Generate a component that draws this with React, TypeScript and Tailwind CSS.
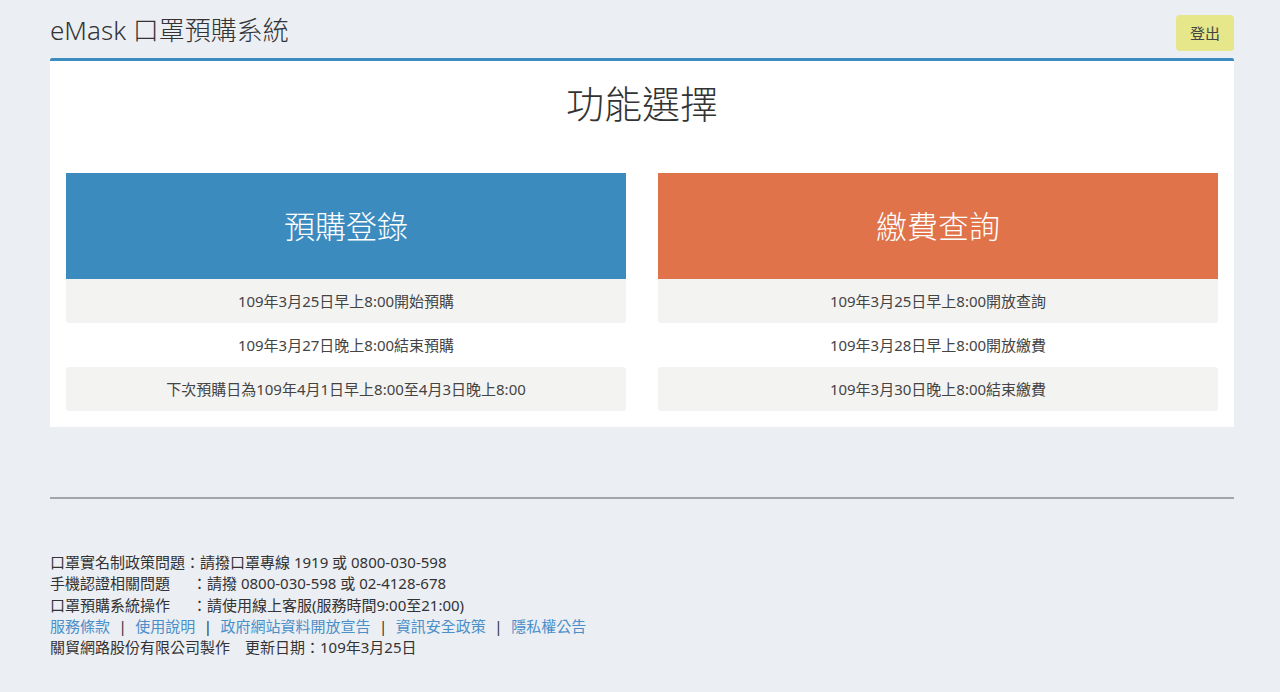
export default function App() {
  const font = {
    fontFamily: '"Noto Sans", "Noto Sans CJK TC", sans-serif',
  };

  const left = [
    "109年3月25日早上8:00開始預購",
    "109年3月27日晚上8:00結束預購",
    "下次預購日為109年4月1日早上8:00至4月3日晚上8:00",
  ];
  const right = [
    "109年3月25日早上8:00開放查詢",
    "109年3月28日早上8:00開放繳費",
    "109年3月30日晚上8:00結束繳費",
  ];

  return (
    <div className="min-h-screen bg-[#ebeef3] text-[#333]" style={font}>
      <div className="ml-[50px] w-[1184px] pt-[15px]">
        {/* Header */}
        <header className="flex items-start justify-between h-[43px]">
          <h1 className="text-[26px] leading-[30px] font-light text-[#333]">
            eMask 口罩預購系統
          </h1>
          <button className="h-[36px] w-[58px] rounded-[4px] bg-[#e6e68a] text-[15px] text-[#444]">
            登出
          </button>
        </header>

        {/* Card */}
        <section className="bg-white border-t-[3px] border-[#3c8bbf] rounded-t-[2px] pb-[16px]">
          <h2 className="text-center text-[38px] leading-[48px] pt-[18px] pb-[46px] font-light text-[#333]">
            功能選擇
          </h2>
          <div className="grid grid-cols-2 gap-[32px] px-[16px]">
            <Block title="預購登錄" color="bg-[#3c8bbf]" rows={left} />
            <Block title="繳費查詢" color="bg-[#e0734a]" rows={right} />
          </div>
        </section>

        <hr className="mt-[70px] border-t-[2px] border-[#a3a5a8]" />

        {/* Footer */}
        <footer className="pt-[53px] text-[15px] leading-[21.25px] text-[#333]">
          <p>口罩實名制政策問題：請撥口罩專線 1919 或 0800-030-598</p>
          <p>
            手機認證相關問題<span className="inline-block w-[22px]"></span>：請撥 0800-030-598 或 02-4128-678
          </p>
          <p>
            口罩預購系統操作<span className="inline-block w-[22px]"></span>：請使用線上客服(服務時間9:00至21:00)
          </p>
          <p className="text-[#4a8fc9]">
            服務條款<Sep />使用說明<Sep />政府網站資料開放宣告<Sep />資訊安全政策<Sep />隱私權公告
          </p>
          <p>關貿網路股份有限公司製作　更新日期：109年3月25日</p>
        </footer>
      </div>
    </div>
  );
}

function Sep() {
  return <span className="text-[#333] px-[8.5px]">|</span>;
}

function Block({
  title,
  color,
  rows,
}: {
  title: string;
  color: string;
  rows: string[];
}) {
  return (
    <div>
      <div
        className={`${color} h-[106px] flex items-center justify-center text-white text-[31px] font-light`}
      >
        {title}
      </div>
      {rows.map((r, i) => (
        <div
          key={r}
          className={`h-[44px] flex items-center justify-center text-[15px] text-[#444] ${
            i % 2 === 0 ? "bg-[#f3f3f2] rounded-b-[3px]" : "bg-white"
          } ${i === 2 ? "rounded-t-[3px]" : ""}`}
        >
          {r}
        </div>
      ))}
    </div>
  );
}
